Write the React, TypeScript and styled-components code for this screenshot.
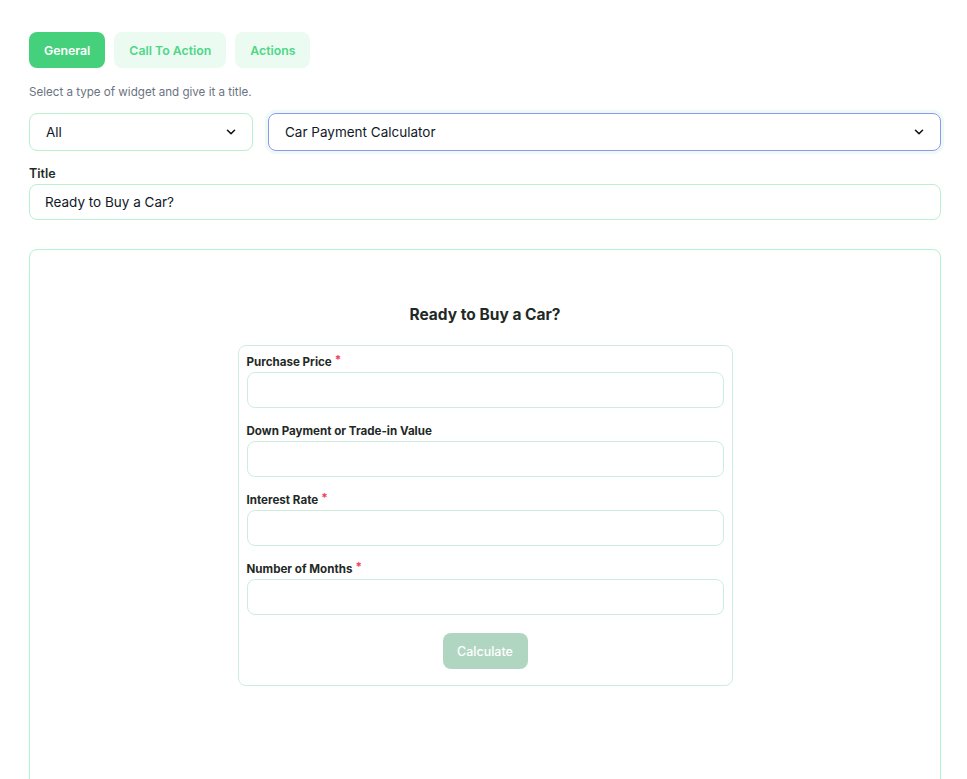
import React from 'react';
import styled, { createGlobalStyle } from 'styled-components';

const GlobalStyle = createGlobalStyle`
  body {
    margin: 0;
    background: #ffffff;
    font-family: Inter, "Noto Sans", "Liberation Sans", sans-serif;
    color: #1f2a27;
  }
  * { box-sizing: border-box; }
`;

const Page = styled.div`
  padding: 32px 26px 0 29px;
  height: 779px;
  overflow: hidden;
`;

const Tabs = styled.div`
  display: flex;
  gap: 9px;
`;

const Tab = styled.button<{ $active?: boolean }>`
  height: 36px;
  padding: 0 15px;
  border: none;
  border-radius: 8px;
  font-family: inherit;
  font-size: 12.3px;
  font-weight: 600;
  background: ${(p) => (p.$active ? '#45d07c' : '#ecfbf2')};
  color: ${(p) => (p.$active ? '#ffffff' : '#4fd687')};
  cursor: pointer;
`;

const Hint = styled.p`
  margin: 17px 0 14px;
  font-size: 11.6px;
  color: #6b7280;
  line-height: 14px;
`;

const SelectRow = styled.div`
  display: flex;
  gap: 15px;
`;

const Select = styled.div<{ $width?: string; $focused?: boolean }>`
  flex: ${(p) => (p.$width ? `0 0 ${p.$width}` : '1')};
  height: 38px;
  display: flex;
  align-items: center;
  justify-content: space-between;
  padding: 0 14px 0 16px;
  border: 1px solid ${(p) => (p.$focused ? '#8b97f2' : '#b9f0d1')};
  border-radius: 8px;
  box-shadow: ${(p) => (p.$focused ? '0 0 0 3px #eefaf3' : 'none')};
  font-size: 13.5px;
  color: #111827;
`;

const Chevron = () => (
  <svg width="14" height="14" viewBox="0 0 24 24" fill="none" stroke="#111" strokeWidth="2.6" strokeLinecap="round" strokeLinejoin="round">
    <path d="M6 9l6 6 6-6" />
  </svg>
);

const FieldLabel = styled.label`
  display: block;
  margin: 16px 0 3px;
  font-size: 12.5px;
  font-weight: 600;
  color: #1f2a27;
  line-height: 14px;
`;

const TextInput = styled.div`
  height: 36px;
  display: flex;
  align-items: center;
  padding: 0 15px;
  border: 1px solid #b9f0d1;
  border-radius: 8px;
  font-size: 13.5px;
  color: #111827;
`;

const Preview = styled.div`
  margin-top: 29px;
  height: 600px;
  border: 1px solid #b3f2d2;
  border-radius: 8px;
  padding: 55px 0 0;
  display: flex;
  flex-direction: column;
  align-items: center;
`;

const WidgetTitle = styled.h2`
  margin: 0 0 20px;
  font-size: 15.5px;
  font-weight: 700;
  color: #1f2a27;
  line-height: 20px;
`;

const Card = styled.div`
  width: 495px;
  border: 1px solid #cdeedf;
  border-radius: 8px;
  padding: 9px 8px 16px 8px;
  display: flex;
  flex-direction: column;
`;

const Field = styled.div`
  & + & {
    margin-top: 16px;
  }
`;

const Label = styled.div`
  height: 14px;
  font-size: 11.6px;
  font-weight: 700;
  color: #1f2a27;
  line-height: 14px;
  margin-bottom: 3px;
`;

const Star = styled.span`
  color: #f43f5e;
  margin-left: 3px;
  line-height: 1;
  position: relative;
  top: -2px;
`;

const Input = styled.div`
  height: 36px;
  border: 1px solid #cdeedf;
  border-radius: 8px;
`;

const CalcButton = styled.button`
  align-self: center;
  margin-top: 18px;
  width: 85px;
  height: 36px;
  border: none;
  border-radius: 8px;
  background: #b0d6c1;
  color: #ffffff;
  font-family: inherit;
  font-size: 12.5px;
  font-weight: 500;
`;

const fields = [
  { label: 'Purchase Price', required: true },
  { label: 'Down Payment or Trade-in Value', required: false },
  { label: 'Interest Rate', required: true },
  { label: 'Number of Months', required: true },
];

export default function App() {
  return (
    <>
      <GlobalStyle />
      <Page>
        <Tabs>
          <Tab $active>General</Tab>
          <Tab>Call To Action</Tab>
          <Tab>Actions</Tab>
        </Tabs>
        <Hint>Select a type of widget and give it a title.</Hint>
        <SelectRow>
          <Select $width="224px">
            All
            <Chevron />
          </Select>
          <Select $focused>
            Car Payment Calculator
            <Chevron />
          </Select>
        </SelectRow>
        <FieldLabel>Title</FieldLabel>
        <TextInput>Ready to Buy a Car?</TextInput>
        <Preview>
          <WidgetTitle>Ready to Buy a Car?</WidgetTitle>
          <Card>
            {fields.map((f) => (
              <Field key={f.label}>
                <Label>
                  {f.label}
                  {f.required && <Star>*</Star>}
                </Label>
                <Input />
              </Field>
            ))}
            <CalcButton>Calculate</CalcButton>
          </Card>
        </Preview>
      </Page>
    </>
  );
}
